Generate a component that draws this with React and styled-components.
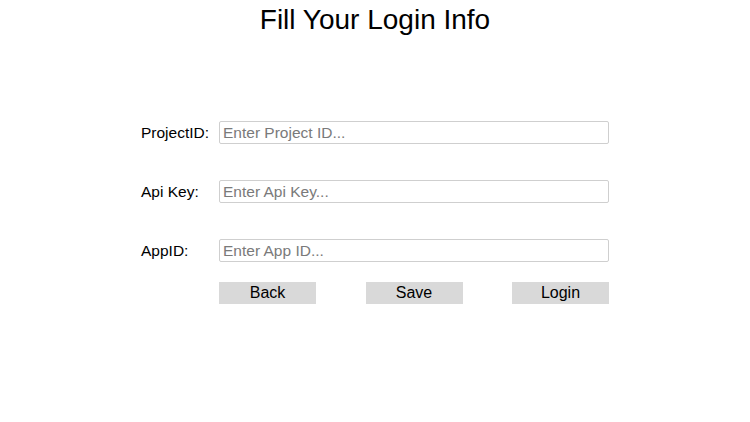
import React from "react";
import styled, { createGlobalStyle } from "styled-components";

const Global = createGlobalStyle`
  html, body { margin: 0; padding: 0; background: #fff; }
  body { font-family: "Liberation Sans", Arial, sans-serif; color: #000; }
`;

const Page = styled.div`
  width: 750px;
  display: flex;
  flex-direction: column;
  align-items: center;
`;

const Title = styled.h1`
  margin: 0;
  padding-top: 4px;
  font-size: 28px;
  font-weight: 400;
  line-height: 32px;
`;

const Form = styled.form`
  margin-top: 85px;
  display: grid;
  grid-template-columns: 78px 390px;
  row-gap: 36px;
  align-items: center;
`;

const Label = styled.label`
  font-size: 15.5px;
`;

const Input = styled.input`
  box-sizing: border-box;
  width: 390px;
  height: 23px;
  border: 1px solid #cfcfcf;
  border-radius: 2px;
  padding: 0 3px;
  font-family: "Liberation Sans", Arial, sans-serif;
  font-size: 15.5px;
  outline: none;
  &::placeholder { color: #7a7a7a; }
`;

const Buttons = styled.div`
  grid-column: 2;
  margin-top: -16px;
  display: flex;
  justify-content: space-between;
`;

const Button = styled.button`
  width: 97px;
  height: 22px;
  border: none;
  border-radius: 0;
  background: #d9d9d9;
  font-family: "Liberation Sans", Arial, sans-serif;
  font-size: 16px;
  color: #000;
  padding: 0;
`;

export default function App() {
  return (
    <>
      <Global />
      <Page>
        <Title>Fill Your Login Info</Title>
        <Form onSubmit={(e) => e.preventDefault()}>
          <Label>ProjectID:</Label>
          <Input placeholder="Enter Project ID..." />
          <Label>Api Key:</Label>
          <Input placeholder="Enter Api Key..." />
          <Label>AppID:</Label>
          <Input placeholder="Enter App ID..." />
          <Buttons>
            <Button type="button">Back</Button>
            <Button type="button">Save</Button>
            <Button type="button">Login</Button>
          </Buttons>
        </Form>
      </Page>
    </>
  );
}
